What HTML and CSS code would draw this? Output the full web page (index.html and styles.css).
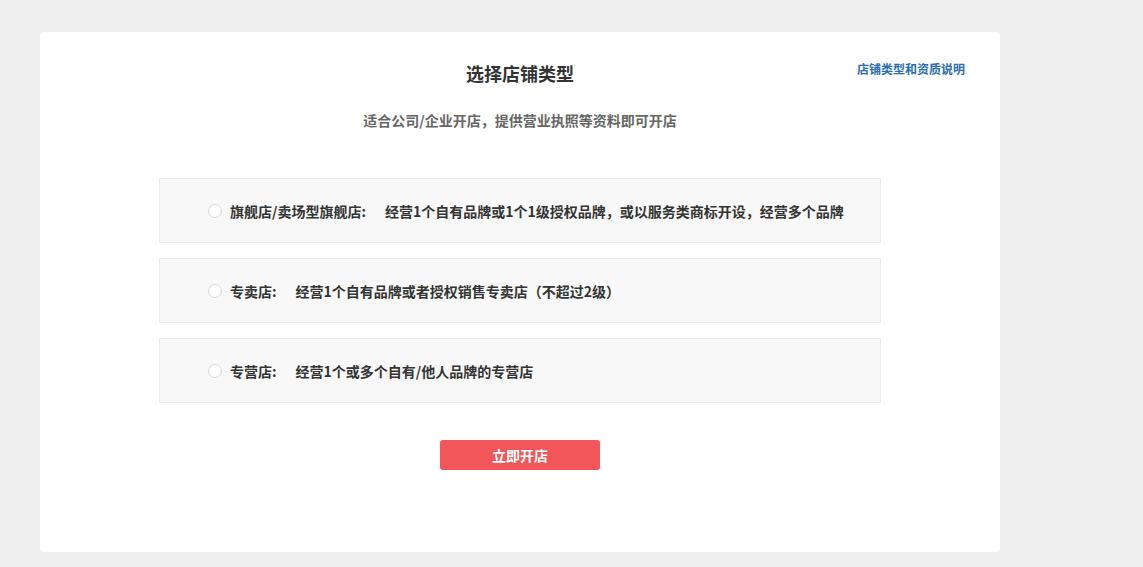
FILE: index.html
```html
<!DOCTYPE html>
<html lang="zh-CN">
<head>
<meta charset="utf-8">
<title>选择店铺类型</title>
<link rel="stylesheet" href="styles.css">
</head>
<body>
<main class="card">
  <header class="head">
    <span></span>
    <h1 class="title">选择店铺类型</h1>
    <a class="help" href="#">店铺类型和资质说明</a>
  </header>
  <p class="sub">适合公司/企业开店，提供营业执照等资料即可开店</p>
  <ul class="options">
    <li class="option"><span class="radio"></span><span class="label">旗舰店/卖场型旗舰店:</span><span class="desc">经营1个自有品牌或1个1级授权品牌，或以服务类商标开设，经营多个品牌</span></li>
    <li class="option"><span class="radio"></span><span class="label">专卖店:</span><span class="desc">经营1个自有品牌或者授权销售专卖店（不超过2级）</span></li>
    <li class="option"><span class="radio"></span><span class="label">专营店:</span><span class="desc">经营1个或多个自有/他人品牌的专营店</span></li>
  </ul>
  <div class="actions"><button class="btn" type="button">立即开店</button></div>
</main>
</body>
</html>
```

FILE: styles.css
```css
* { box-sizing: border-box; }
html, body { margin: 0; padding: 0; }
body {
  background: #f0f0f0;
  font-family: "Noto Sans CJK SC", "Noto Sans", sans-serif;
  color: #333;
  padding: 32px 0 0 40px;
}
.card {
  width: 960px;
  height: 520px;
  background: #fff;
  border-radius: 4px;
  padding: 29px 0 0;
}
.head {
  display: grid;
  grid-template-columns: 1fr auto 1fr;
  padding: 0 35px;
  align-items: start;
}
.title {
  margin: 0;
  font-size: 18px;
  line-height: 24px;
  font-weight: 700;
  color: #333;
}
.help {
  justify-self: end;
  margin-top: 0;
  font-size: 12px;
  line-height: 16px;
  font-weight: 700;
  color: #2a6db0;
  text-decoration: none;
}
.sub {
  margin: 25px 0 0;
  text-align: center;
  font-size: 14px;
  line-height: 20px;
  font-weight: 700;
  color: #666;
}
.options {
  list-style: none;
  margin: 48px auto 0;
  padding: 0;
  width: 722px;
  display: flex;
  flex-direction: column;
  gap: 15px;
}
.option {
  height: 65px;
  background: #f8f8f8;
  border: 1px solid #ebebeb;
  display: flex;
  align-items: center;
  padding-left: 48px;
  font-size: 14px;
  font-weight: 700;
  color: #333;
}
.radio {
  width: 14px;
  height: 14px;
  border: 1px solid #d9d9d9;
  border-radius: 50%;
  background: #fff;
  margin-right: 8px;
  flex: none;
}
.desc { margin-left: 19px; }
.actions {
  display: flex;
  justify-content: center;
  margin-top: 37px;
}
.btn {
  width: 160px;
  height: 30px;
  border: 0;
  border-radius: 3px;
  background: #f2555a;
  color: #fff;
  font-family: inherit;
  font-size: 14px;
  font-weight: 700;
  cursor: pointer;
}
```
